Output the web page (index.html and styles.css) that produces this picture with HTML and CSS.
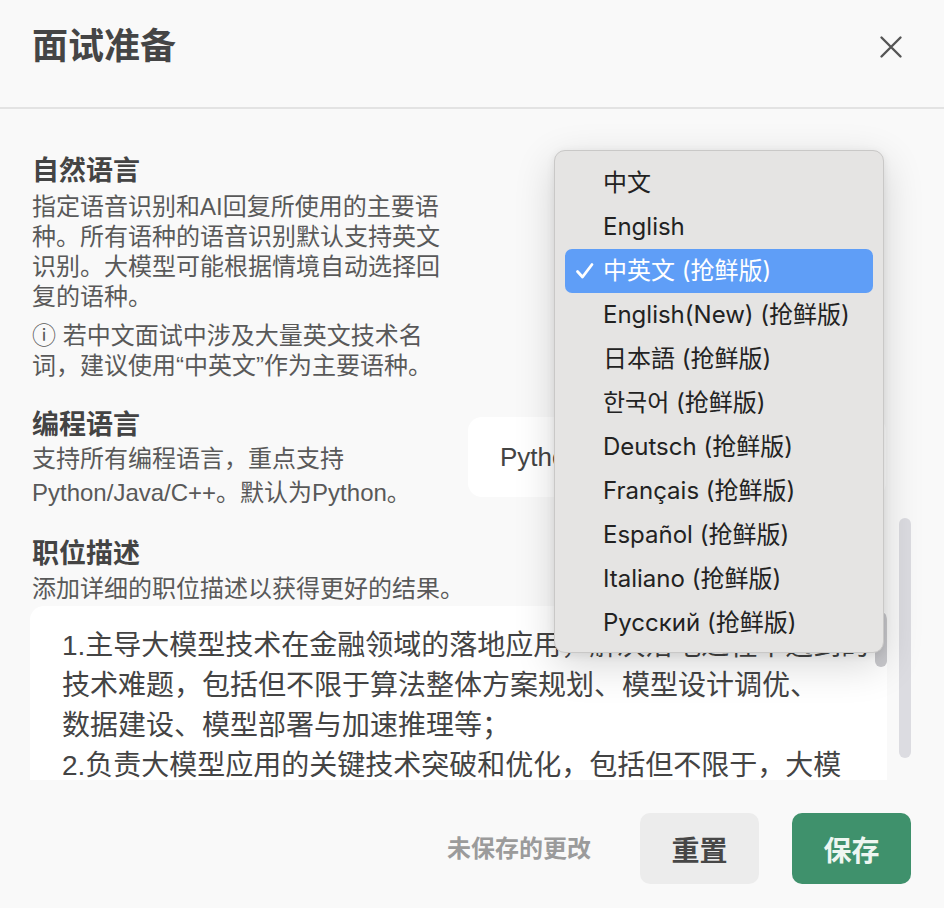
FILE: index.html
```html
<!DOCTYPE html>
<html lang="zh-CN">
<head>
<meta charset="utf-8">
<title>面试准备</title>
<link rel="stylesheet" href="styles.css">
</head>
<body>
<div class="modal">
  <header class="modal-header">
    <h1 class="modal-title">面试准备</h1>
    <button class="close-btn" aria-label="关闭">
      <svg width="24" height="24" viewBox="0 0 24 24"><path d="M2.5 2.5 L21.5 21.5 M21.5 2.5 L2.5 21.5" stroke="#555" stroke-width="2.4" stroke-linecap="round" fill="none"/></svg>
    </button>
  </header>

  <div class="modal-body">
    <section class="row">
      <div class="row-text">
        <div class="label">自然语言</div>
        <p class="desc">指定语音识别和AI回复所使用的主要语种。所有语种的语音识别默认支持英文识别。大模型可能根据情境自动选择回复的语种。</p>
        <p class="desc note">ⓘ 若中文面试中涉及大量英文技术名词，建议使用“中英文”作为主要语种。</p>
      </div>
      <div class="row-control"></div>
    </section>

    <section class="row row-gap">
      <div class="row-text">
        <div class="label">编程语言</div>
        <p class="desc desc-tall">支持所有编程语言，重点支持Python/Java/C++。默认为Python。</p>
      </div>
      <div class="row-control">
        <div class="select select-code">Python</div>
      </div>
    </section>

    <section class="block row-gap">
      <div class="label">职位描述</div>
      <p class="desc desc-jd">添加详细的职位描述以获得更好的结果。</p>
      <div class="textarea">
        <div class="textarea-line">1.主导大模型技术在金融领域的落地应用，解决落地过程中遇到的</div>
        <div class="textarea-line">技术难题，包括但不限于算法整体方案规划、模型设计调优、</div>
        <div class="textarea-line">数据建设、模型部署与加速推理等；</div>
        <div class="textarea-line">2.负责大模型应用的关键技术突破和优化，包括但不限于，大模</div>
        <div class="scroll-thumb inner-thumb"></div>
      </div>
    </section>

    <div class="scroll-thumb outer-thumb"></div>
  </div>

  <footer class="modal-footer">
    <span class="unsaved">未保存的更改</span>
    <button class="btn btn-reset">重置</button>
    <button class="btn btn-save">保存</button>
  </footer>

  <ul class="menu">
    <li class="menu-item">中文</li>
    <li class="menu-item">English</li>
    <li class="menu-item selected">
      <svg class="check" width="20" height="20" viewBox="0 0 20 20"><path d="M2.5 10.5 L7.5 16 L17 3.5" stroke="#fff" stroke-width="2.8" stroke-linecap="round" stroke-linejoin="round" fill="none"/></svg>
      中英文 (抢鲜版)
    </li>
    <li class="menu-item">English(New) (抢鲜版)</li>
    <li class="menu-item">日本語 (抢鲜版)</li>
    <li class="menu-item">한국어 (抢鲜版)</li>
    <li class="menu-item">Deutsch (抢鲜版)</li>
    <li class="menu-item">Français (抢鲜版)</li>
    <li class="menu-item">Español (抢鲜版)</li>
    <li class="menu-item">Italiano (抢鲜版)</li>
    <li class="menu-item">Русский (抢鲜版)</li>
  </ul>
</div>
</body>
</html>
```

FILE: styles.css
```css
* { box-sizing: border-box; }

html, body {
  margin: 0;
  padding: 0;
  background: #f9f9f9;
}

.modal {
  position: relative;
  width: 944px;
  height: 908px;
  overflow: hidden;
  background: #f9f9f9;
  font-family: "Liberation Sans", "Noto Sans CJK SC", sans-serif;
  color: #4a4a4a;
}

/* header */
.modal-header {
  height: 109px;
  border-bottom: 2px solid #e3e3e3;
  display: flex;
  justify-content: space-between;
  align-items: flex-start;
  padding: 24px 41px 0 32px;
}

.modal-title {
  margin: 0;
  font-size: 36px;
  line-height: 46px;
  font-weight: 600;
  color: #454545;
}

.close-btn {
  margin-top: 11px;
  padding: 0;
  border: 0;
  background: transparent;
  width: 24px;
  height: 24px;
  display: flex;
}

/* body */
.modal-body {
  position: relative;
  height: 671px;
  overflow: hidden;
  padding: 45px 58px 0 32px;
}

.row {
  display: grid;
  grid-template-columns: 414px 1fr;
  column-gap: 22px;
}

.row-gap { margin-top: 27px; }

.label {
  font-size: 27px;
  line-height: 34px;
  font-weight: 700;
  color: #444;
}

.desc {
  margin: 4px 0 0;
  font-size: 24px;
  line-height: 30px;
  color: #595959;
}

.note { margin-top: 9px; }

.desc-tall {
  margin-top: 0;
  line-height: 34px;
}

.desc-jd { margin-top: 3px; }

.row-control {
  display: flex;
  align-items: flex-start;
}

.select {
  height: 80px;
  border-radius: 14px;
  background: #fff;
  display: flex;
  align-items: center;
  padding-left: 32px;
  font-size: 26px;
  color: #444;
}

.select-code {
  width: 100%;
  margin-top: 9px;
}

/* textarea */
.textarea {
  position: relative;
  margin: 2px -1px 0 -2px;
  height: 200px;
  background: #fff;
  border-radius: 14px;
  padding: 20px 40px 0 32px;
  font-size: 28px;
  line-height: 40px;
  color: #444;
  overflow: hidden;
}

.textarea-line {
  white-space: nowrap;
}

.scroll-thumb {
  position: absolute;
  width: 12px;
  border-radius: 6px;
}

.inner-thumb {
  left: 845px;
  top: 6px;
  height: 55px;
  background: #c9c9cd;
}

.outer-thumb {
  left: 899px;
  top: 409px;
  height: 240px;
  background: #dcdce1;
}

/* footer */
.modal-footer {
  height: 128px;
  display: flex;
  justify-content: flex-end;
  align-items: flex-start;
  padding: 33px 33px 0 0;
}

.unsaved {
  font-size: 24px;
  line-height: 71px;
  font-weight: 600;
  color: #9b9b9b;
  margin-right: 49px;
}

.btn {
  width: 119px;
  height: 71px;
  border: 0;
  border-radius: 10px;
  font-family: "Liberation Sans", "Noto Sans CJK SC", sans-serif;
  font-size: 28px;
  font-weight: 700;
  padding: 0;
}

.btn-reset {
  background: #ececec;
  color: #474747;
}

.btn-save {
  margin-left: 33px;
  background: #3f916c;
  color: #eef6f1;
}

/* popup menu */
.menu {
  position: absolute;
  left: 554px;
  top: 150px;
  width: 330px;
  height: 503px;
  margin: 0;
  padding: 10px 10px 9px;
  list-style: none;
  background: #e5e4e3;
  border: 1px solid #c9c8c7;
  border-radius: 11px;
  box-shadow: 0 12px 40px rgba(0, 0, 0, 0.16), 0 2px 8px rgba(0, 0, 0, 0.08);
  font-family: "Inter", "Noto Sans CJK SC", sans-serif;
  font-size: 24px;
  color: #222;
}

.menu-item {
  position: relative;
  height: 44px;
  line-height: 44px;
  padding-left: 38px;
  border-radius: 7px;
  white-space: nowrap;
}

.menu-item.selected {
  background: #5f9ef7;
  color: #fff;
}

.check {
  position: absolute;
  left: 10px;
  top: 12px;
}
```
